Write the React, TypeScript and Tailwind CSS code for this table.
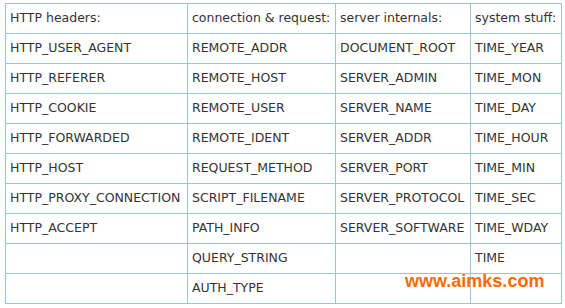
import React from "react";

const rows: string[][] = [
  ["HTTP headers:", "connection & request:", "server internals:", "system stuff:"],
  ["HTTP_USER_AGENT", "REMOTE_ADDR", "DOCUMENT_ROOT", "TIME_YEAR"],
  ["HTTP_REFERER", "REMOTE_HOST", "SERVER_ADMIN", "TIME_MON"],
  ["HTTP_COOKIE", "REMOTE_USER", "SERVER_NAME", "TIME_DAY"],
  ["HTTP_FORWARDED", "REMOTE_IDENT", "SERVER_ADDR", "TIME_HOUR"],
  ["HTTP_HOST", "REQUEST_METHOD", "SERVER_PORT", "TIME_MIN"],
  ["HTTP_PROXY_CONNECTION", "SCRIPT_FILENAME", "SERVER_PROTOCOL", "TIME_SEC"],
  ["HTTP_ACCEPT", "PATH_INFO", "SERVER_SOFTWARE", "TIME_WDAY"],
  ["", "QUERY_STRING", "", "TIME"],
  ["", "AUTH_TYPE", "", ""],
];

const widths = ["w-[182px]", "w-[148px]", "w-[135px]", "w-[91px]"];

export default function App() {
  return (
    <div className="relative w-[565px] h-[308px] bg-white pt-[3px] pl-[5px]">
      <table className="border-collapse table-fixed w-[557px] font-['DejaVu_Sans',Verdana,sans-serif] text-[12.5px] text-[#333]">
        <tbody>
          {rows.map((r, i) => (
            <tr key={i} className="h-[30px]">
              {r.map((c, j) => (
                <td
                  key={j}
                  className={`${widths[j]} border border-[#9cc4d0] px-[4px] align-middle whitespace-nowrap`}
                >
                  {c}
                </td>
              ))}
            </tr>
          ))}
        </tbody>
      </table>
      {/* watermark */}
      <div className="absolute left-[405px] top-[268px] font-['Liberation_Sans',Arial,sans-serif] font-bold text-[18px] text-[#ff6a00]">
        www.aimks.com
      </div>
    </div>
  );
}
